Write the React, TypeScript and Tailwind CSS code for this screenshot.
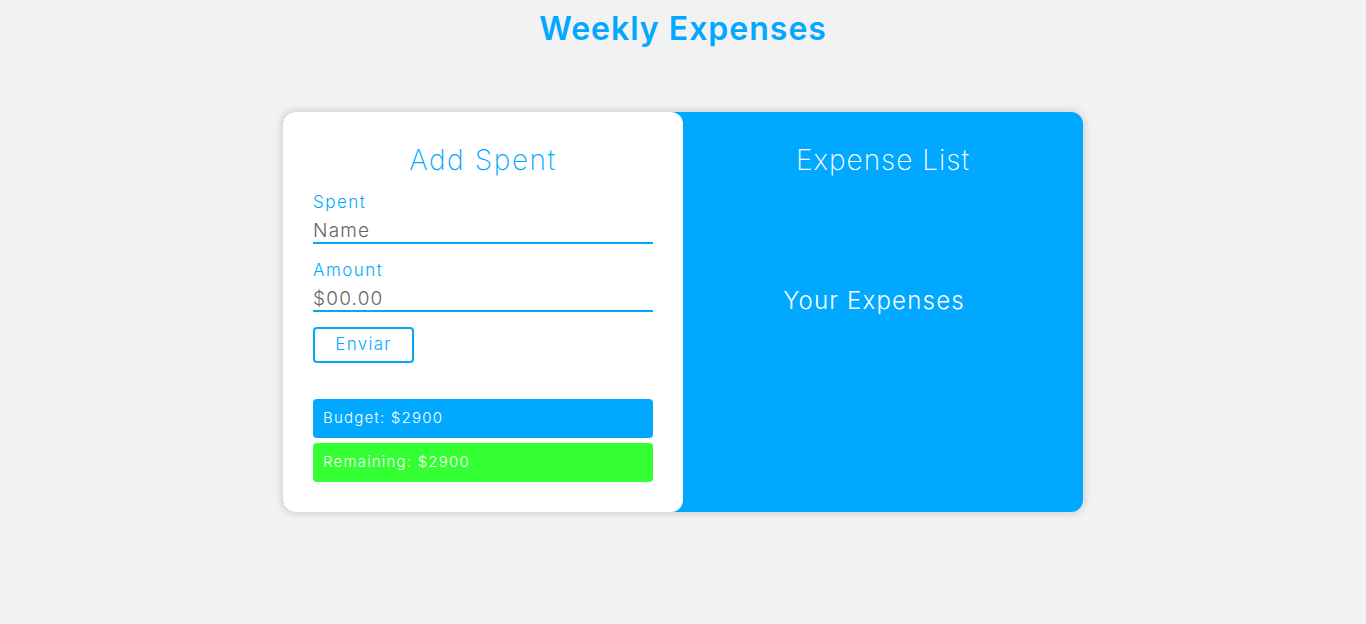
import React from 'react';

const font = { fontFamily: 'Inter, "DejaVu Sans", sans-serif' };

const Field = ({label, placeholder}: {label: string; placeholder: string}) => (
    <div className="flex flex-col">
        <label className="pt-[1px] text-[17px] font-light leading-[22px] text-[#00a8ff] tracking-[1.5px]">{label}</label>
        <input
            type="text"
            placeholder={placeholder}
            className="mt-[5px] h-[26px] w-full border-b-2 border-[#00a8ff] bg-transparent text-[19px] font-light leading-[24px] text-[#555] tracking-[1.2px] outline-none placeholder:text-[#666]"
        />
    </div>
);

const App: React.FC = () => {
    return (
        <div className="min-h-[624px] w-full bg-[#f2f2f2]" style={font}>
            <h1 className="pt-[9px] text-center text-[32px] font-semibold leading-[40px] text-[#00a8ff] tracking-[1px]">
                Weekly Expenses
            </h1>
            <div className="mx-auto mt-[63px] flex h-[400px] w-[800px] rounded-xl bg-[#00a8ff] shadow-[0_0_10px_rgba(0,0,0,0.2)]">
                <div className="flex w-[400px] flex-col rounded-xl bg-white px-[30px] pt-[30px]">
                    <h2 className="text-center text-[28px] font-extralight leading-[36px] text-[#00a8ff] tracking-[1.6px]">Add Spent</h2>
                    <div className="mt-[12px] flex flex-col gap-[14px]">
                        <Field label="Spent" placeholder="Name"/>
                        <Field label="Amount" placeholder="$00.00"/>
                    </div>
                    <button className="mt-[15px] h-[36px] w-[101px] rounded-[4px] border-2 border-[#00a8ff] text-[17px] font-light text-[#00a8ff] tracking-[1.3px]">
                        Enviar
                    </button>
                    <div className="mt-[36px] flex h-[39px] items-center rounded-[4px] bg-[#00a8ff] px-[10px] text-[15px] font-light text-white tracking-[1.2px]">
                        Budget: $2900
                    </div>
                    <div className="mt-[5px] flex h-[39px] items-center rounded-[4px] bg-[#33ff33] px-[10px] text-[15px] font-light text-white tracking-[1.2px]">
                        Remaining: $2900
                    </div>
                </div>
                <div className="flex w-[400px] flex-col items-center pt-[30px]">
                    <h2 className="text-center text-[28px] font-extralight leading-[36px] text-white tracking-[1px]">Expense List</h2>
                    <p className="mt-[108px] mr-[18px] text-[24px] font-light leading-[30px] text-white tracking-[1.2px]">Your Expenses</p>
                </div>
            </div>
        </div>
    );
};

export default App;
